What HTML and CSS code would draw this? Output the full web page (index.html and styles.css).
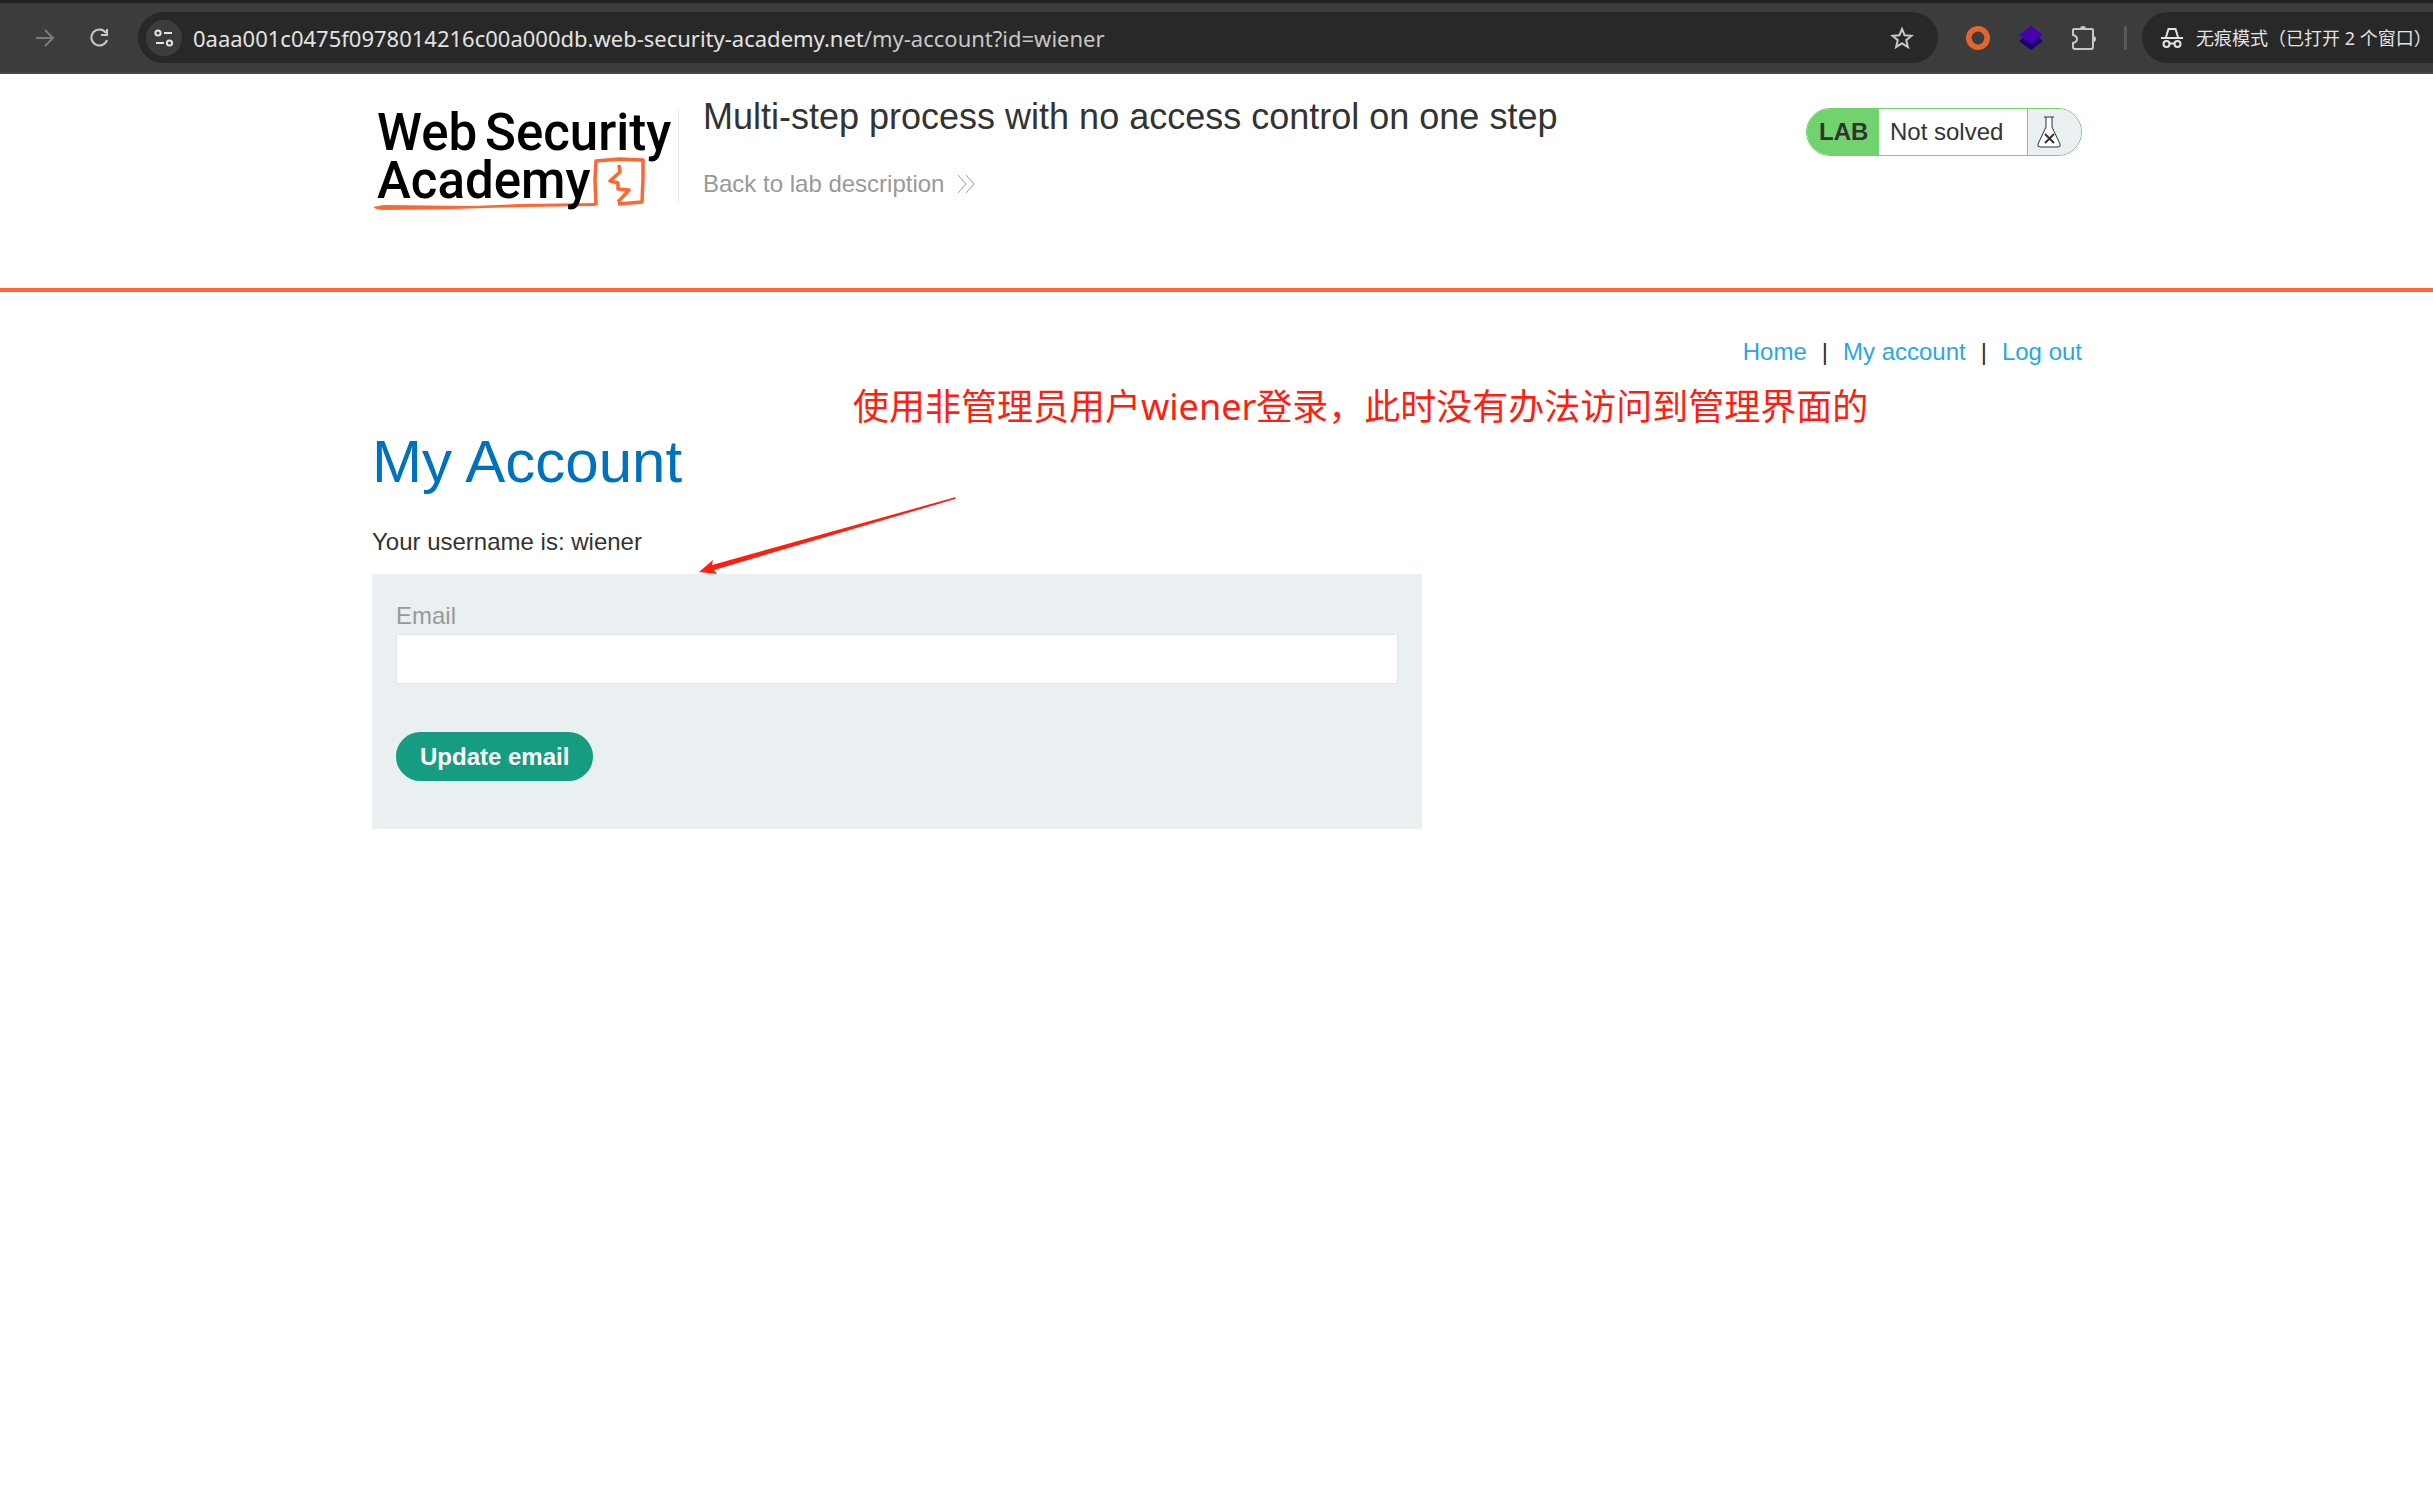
FILE: index.html
```html
<!DOCTYPE html>
<html lang="en">
<head>
    <meta charset="UTF-8">
    <title>Multi-step process with no access control on one step</title>
    <link rel="stylesheet" href="styles.css">
</head>
<body>
    <!-- browser toolbar -->
    <div class="toolbar">
        <svg class="tab-edge" width="375" height="4" viewBox="0 0 375 4"><path d="M10 0H371L375 4H0Q7 4 10 0Z" fill="#3c3c3c"/></svg>
        <button class="tool forward" aria-label="Forward">
            <svg width="20" height="22" viewBox="0 0 20 22" fill="none" stroke="#7c7c7c" stroke-width="2"><path d="M0 11H17M9 3L17 11L9 19"/></svg>
        </button>
        <button class="tool reload" aria-label="Reload">
            <svg width="20" height="20" viewBox="0 0 20 20" fill="none" stroke="#c7c7c7" stroke-width="2"><path d="M16 5A8 8 0 1 0 17 12M17 1V7H11"/></svg>
        </button>
        <div class="address">
            <button class="site-info" aria-label="View site information">
                <svg width="20" height="20" viewBox="0 0 20 20" fill="none" stroke="#e3e3e3" stroke-width="2"><circle cx="4" cy="5" r="2.6"/><path d="M10 5H18M2 15H10"/><circle cx="15.5" cy="15" r="2.6"/></svg>
            </button>
            <span class="url">0aaa001c0475f0978014216c00a000db.web-security-academy.net<span class="path">/my-account?id=wiener</span></span>
            <svg width="24" height="24" viewBox="0 0 24 24" fill="none" stroke="#c7c7c7" stroke-width="2"><path d="M12 3L14.6 9.2L21.5 9.8L16.2 14.2L17.9 21L12 17.3L6.1 21L7.8 14.2L2.5 9.8L9.4 9.2Z"/></svg>
        </div>
        <div class="extensions">
            <svg width="26" height="26" viewBox="0 0 26 26"><circle cx="13" cy="13" r="9.2" fill="none" stroke="#e0662f" stroke-width="5.6"/></svg>
            <svg width="26" height="26" viewBox="0 0 26 26"><path d="M1 16L13 7L25 16L13 25Z" fill="#1c0070"/><path d="M1 10L13 1L25 10L13 19Z" fill="#4602ad"/></svg>
            <svg width="26" height="26" viewBox="0 0 26 26" fill="none" stroke="#c7c7c7" stroke-width="2"><path d="M3 4H21Q22 4 22 5V22Q22 24 20 24H4Q2 24 2 22V18Q6 17 6 14Q6 11 2 10V5Q2 4 3 4Z"/><path d="M10 4Q10 2 12 2Q14 2 14 4M22 12Q24 12 24 14Q24 16 22 16" fill="#c7c7c7"/></svg>
            <span class="separator"></span>
        </div>
        <div class="incognito">
            <svg width="22" height="22" viewBox="0 0 22 22" fill="none" stroke="#e3e3e3" stroke-width="2"><path d="M0 11H22M5 10L7.5 2H14.5L17 10"/><circle cx="5.5" cy="17" r="3"/><circle cx="16.5" cy="17" r="3"/><path d="M8.5 16.5H13.5"/></svg>
            <span>无痕模式（已打开 2 个窗口）</span>
        </div>
    </div>

    <header class="lab-header">
        <div class="container header-row">
            <svg class="logo" width="306" height="108" viewBox="0 0 306 108" role="img" aria-label="Web Security Academy">
                <path d="M1 99L12 97L100 98L150 96L223 95V98L150 99L80 101L12 102Q4 102 1 99Z" fill="#ff6633"/>
                <g fill="none" stroke="#ff6633" stroke-width="3.5" stroke-linejoin="round">
                    <path d="M224 97L223 72L224 53L247 51L271 52L271 70L270 94L246 96"/>
                    <path d="M247 57L248 64L238 73L246 75L246 81L257 82L246 94"/>
                </g>
                <g class="logo-text">
                    <text x="5" y="42">Web</text>
                    <text x="113" y="42">Security</text>
                    <text x="5" y="90">Academy</text>
                </g>
            </svg>
            <div class="lab-title">
                <h2>Multi-step process with no access control on one step</h2>
                <a href="#">Back to lab description
                    <svg width="18" height="18" viewBox="0 0 18 18" fill="none" stroke="#999999"><path d="M1 0L9 9L1 18M9 0L17 9L9 18"/></svg>
                </a>
            </div>
            <div class="lab-status">
                <span class="tag">LAB</span>
                <span class="state">Not solved</span>
                <span class="flask">
                    <svg width="26" height="32" viewBox="0 0 26 32" fill="#fff" stroke="#333332"><path d="M8 1H18M10 1V11L2 28Q1 31 4 31H22Q25 31 24 28L16 11V1"/><path d="M9 18L18 27M18 18L9 27" stroke-width="2"/></svg>
                </span>
            </div>
        </div>
    </header>

    <div class="page">
        <main class="container">
            <nav class="top-links">
                <a href="#">Home</a><span>|</span>
                <a href="#">My account</a><span>|</span>
                <a href="#">Log out</a>
            </nav>
            <h1>My Account</h1>
            <p class="username">Your username is: wiener</p>
            <form class="email-form">
                <label for="email">Email</label>
                <input type="email" id="email" name="email">
                <button type="submit">Update email</button>
            </form>

            <!-- notes drawn over the page -->
            <p class="note">使用非管理员用户wiener登录，此时没有办法访问到管理界面的</p>
            <svg class="arrow" width="258" height="80" viewBox="0 0 258 80"><path d="M0 76L14 64L13 69L257 1L256 3L15 74L18 78Z" fill="#ff1e10"/></svg>
        </main>
    </div>
</body>
</html>
```
FILE: styles.css
```css
* { box-sizing: border-box; }
body { margin: 0; background: #fff; color: #333332; font-family: "Liberation Sans", Arial, sans-serif; font-size: 24px; line-height: 36px; }
a { color: #29a7e1; text-decoration: none; }
svg { display: block; flex: none; }

/* toolbar */
.toolbar {
    position: relative;
    display: flex;
    align-items: center;
    height: 74px;
    padding-left: 36px;
    background: #3c3c3c;
    border-top: 3px solid #1f2120;
    border-bottom: 2px solid #474747;
    overflow: hidden;
    font-family: "Noto Sans", "Noto Sans CJK SC", sans-serif;
}
.tab-edge { position: absolute; top: -3px; left: 0; }
.tool { padding: 0; border: none; background: none; }
.forward { margin-right: 34px; }
.reload { margin-right: 28px; }
.address {
    flex: 1;
    display: flex;
    align-items: center;
    height: 51px;
    padding: 0 24px 0 8px;
    background: #282828;
    border-radius: 26px;
}
.site-info {
    display: grid;
    place-items: center;
    width: 36px;
    height: 36px;
    margin-right: 11px;
    padding: 0;
    border: none;
    background: #3c3c3c;
    border-radius: 50%;
}
.url { flex: 1; color: #e3e3e3; font-size: 22px; }
.url .path { color: #c7c7c7; }
.extensions { display: flex; align-items: center; gap: 27px; padding: 0 15px 0 27px; }
.separator { width: 3px; height: 24px; background: #5a5a5a; border-radius: 2px; }
.incognito {
    display: flex;
    align-items: center;
    gap: 13px;
    width: 291px;
    height: 51px;
    padding-left: 19px;
    background: #282828;
    border-radius: 26px 0 0 26px;
    color: #e3e3e3;
    font-size: 18px;
    white-space: nowrap;
}

/* lab header */
.container { position: relative; max-width: 1710px; margin: 0 auto; }
.lab-header { height: 218px; padding: 34px 0 0 21px; border-bottom: 4px solid #ff6633; }
.header-row { display: flex; align-items: flex-start; }
.logo-text { font-family: Roboto, sans-serif; font-size: 51px; font-weight: 500; }
.lab-title { flex: 1; padding-left: 24px; border-left: 1px solid #e6e6e6; height: 94px; }
.lab-title h2 { margin: -11px 0 29px; font-size: 36px; font-weight: normal; line-height: 40px; }
.lab-title a { display: flex; align-items: center; gap: 13px; color: #999999; }
.lab-status {
    display: flex;
    height: 48px;
    border: 1px solid #71d26e;
    border-radius: 24px;
    overflow: hidden;
    line-height: 46px;
}
.tag { width: 72px; padding-left: 12px; background: #71d26e; font-weight: bold; }
.state { width: 148px; padding-left: 11px; }
.flask { display: grid; align-items: center; width: 54px; padding-left: 8px; border-left: 1px solid #71d26e; background: #eaeff2; }

/* account page */
.page { padding-left: 21px; }
.top-links { display: flex; justify-content: flex-end; gap: 15px; padding-top: 42px; }
h1 { margin: 52px 0 22px; color: #0071bc; font-size: 60px; font-weight: normal; line-height: 80px; }
.username { margin: 0 0 14px; }
.email-form { max-width: 1050px; padding: 24px 24px 48px; background: #eaeff2; }
.email-form label { display: block; color: #999999; }
.email-form input {
    display: block;
    width: 100%;
    height: 50px;
    margin-bottom: 48px;
    padding: 0 12px;
    border: 1px solid #e4e4e4;
    background: #fff;
    font: inherit;
}
.email-form button {
    height: 49px;
    padding: 0 24px;
    border: none;
    border-radius: 25px;
    background: #169c80;
    color: #fff;
    font: bold 24px "Liberation Sans", Arial, sans-serif;
}

/* notes */
.note {
    position: absolute;
    top: 89px;
    left: 481px;
    margin: 0;
    color: #ff1e10;
    font-family: "Noto Sans", "Noto Sans CJK SC", sans-serif;
    font-size: 36px;
    line-height: 52px;
    white-space: nowrap;
}
.arrow { position: absolute; top: 204px; left: 327px; }
```
